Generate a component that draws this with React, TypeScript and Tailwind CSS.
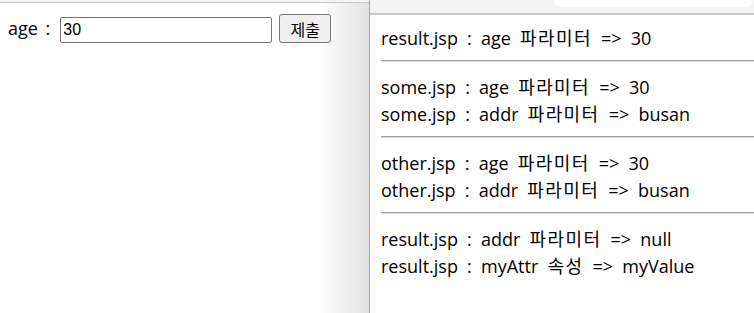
import React from "react";

const font = "font-['Open_Sans','Noto_Sans_CJK_KR',sans-serif]";

const blocks: string[][] = [
  ["result.jsp : age 파라미터 => 30"],
  ["some.jsp : age 파라미터 => 30", "some.jsp : addr 파라미터 => busan"],
  ["other.jsp : age 파라미터 => 30", "other.jsp : addr 파라미터 => busan"],
  ["result.jsp : addr 파라미터 => null", "result.jsp : myAttr 속성 => myValue"],
];

// Korean runs get a little tracking to match the wider hangul in the capture
function Line({ text }: { text: string }) {
  const parts = text.split(/([가-힣]+)/);
  return (
    <div className="whitespace-pre [word-spacing:4.5px]">
      {parts.map((p, i) =>
        /[가-힣]/.test(p) ? (
          <span key={i} className="tracking-[1.4px]">
            {p}
          </span>
        ) : (
          <span key={i}>{p}</span>
        ),
      )}
    </div>
  );
}

function FormWindow() {
  return (
    <div className="flex h-full w-[369px] shrink-0 flex-col bg-[linear-gradient(to_right,#ffffff_318px,#e2e2e2_369px)]">
      <div className="h-[2px] bg-[#f4f4f4]" />
      <div className="h-px bg-[#c6c6c6]" />
      <div className={`flex items-center pl-[8px] pt-[11px] text-[18px] text-black ${font}`}>
        <span className="[word-spacing:3px]">age :</span>
        <input
          defaultValue="30"
          className="ml-[10px] mt-[3px] h-[26px] w-[212px] rounded-[2px] border border-[#767676] bg-white px-[2px] font-['Liberation_Sans',sans-serif] text-[16px] outline-none"
        />
        <button className="ml-[7px] h-[29px] w-[52px] rounded-[3px] border border-[#767676] bg-[#efefef] font-['Noto_Sans_CJK_KR',sans-serif] text-[16px] leading-none text-black">
          제출
        </button>
      </div>
    </div>
  );
}

function ResultWindow() {
  return (
    <div className="flex h-full flex-1 flex-col border-l border-[#a4a4a4] bg-white">
      <div className="flex h-[13px] bg-[#f3f3f3]">
        <div className="w-[184px]" />
        <div className="mr-px h-[7px] flex-1 rounded-b-[12px] bg-white" />
      </div>
      <div className="h-[2px] bg-[#c8c8c8]" />
      <div className={`pl-[11px] pt-[10px] text-[18px] leading-[27px] text-black ${font}`}>
        {blocks.map((lines, i) => (
          <div key={i}>
            {i > 0 && <div className="mb-[12px] mt-[8px] h-[2px] border-t border-b border-t-[#a0a0a0] border-b-[#d8d8d8]" />}
            {lines.map((l) => (
              <Line key={l} text={l} />
            ))}
          </div>
        ))}
      </div>
    </div>
  );
}

export default function App() {
  return (
    <div className="flex h-[313px] w-[754px] overflow-hidden bg-white">
      <FormWindow />
      <ResultWindow />
    </div>
  );
}
